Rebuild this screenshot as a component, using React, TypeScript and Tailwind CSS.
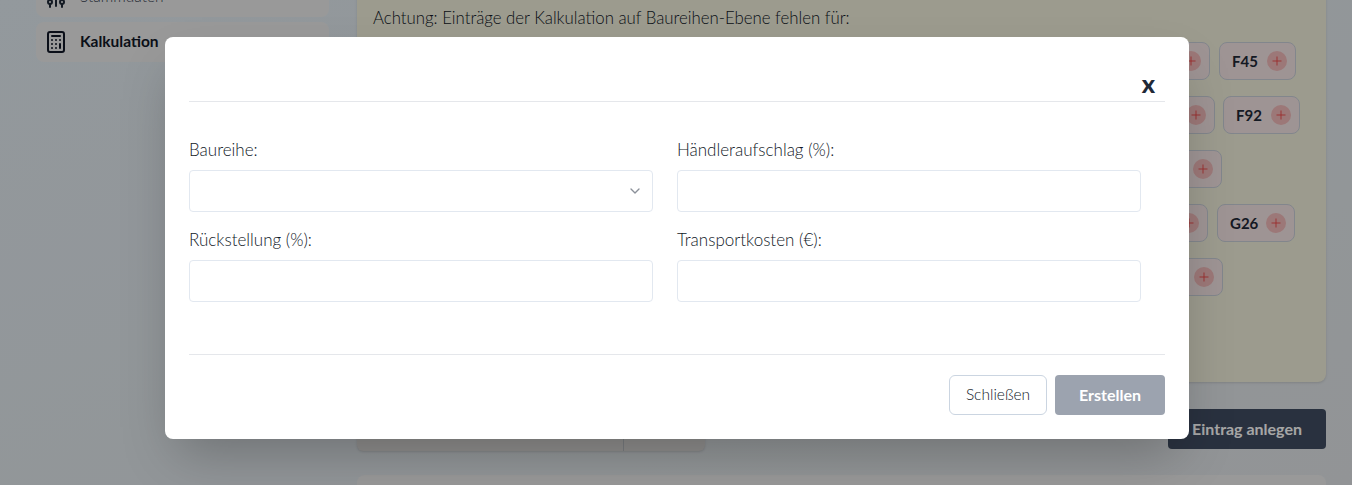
import React from "react";
import { Calculator, ChevronDown, Plus } from "lucide-react";

const fontStack = "font-['Lato','Noto_Sans',sans-serif]";

const Chip = ({ label, className = "" }: { label: string; className?: string }) => (
  <div
    className={`h-[38px] flex items-center justify-between pl-[12px] pr-[8px] rounded-lg border border-[#c8ced8] bg-[#f3e4e4] ${className}`}
  >
    <span className="text-[15px] font-bold text-[#1f2937]">{label}</span>
    <span className="w-5 h-5 rounded-full bg-[#f0b8b8] flex items-center justify-center">
      <Plus className="w-3.5 h-3.5 text-[#ef4444]" strokeWidth={1.5} />
    </span>
  </div>
);

const Field = ({ label, select }: { label: string; select?: boolean }) => (
  <div className="w-[464px]">
    <label className="block text-[17px] font-light text-[#111827] leading-6 mb-2">{label}</label>
    <div className="h-[42px] rounded border border-[#e2e8f0] bg-white flex items-center justify-end pr-[9px]">
      {select && <ChevronDown className="w-4 h-4 text-[#8b9099]" />}
    </div>
  </div>
);

const StammdatenIcon = () => (
  <svg
    viewBox="0 0 24 24"
    fill="none"
    stroke="currentColor"
    strokeWidth={2}
    strokeLinecap="round"
    className="w-6 h-6 text-[#1f2937]"
  >
    <path d="M6 2v13M6 19v3M12 2v19M18 2v13M18 19v3" />
    <circle cx="6" cy="17" r="2" />
    <circle cx="18" cy="17" r="2" />
  </svg>
);

export default function App() {
  return (
    <div
      className={`relative h-[485px] overflow-hidden bg-linear-to-br from-[#e2ebf1] to-[#e0e4e7] ${fontStack}`}
    >
      <div className="flex h-full">
        {/* Sidebar */}
        <aside className="w-[357px] shrink-0 pl-9 pr-7 -mt-[23px] flex flex-col gap-[5px]">
          <div className="h-10 rounded-lg bg-[#ececec] flex items-center gap-3 px-2">
            <StammdatenIcon />
            <span className="text-[15.5px] font-light text-[#374151]">Stammdaten</span>
          </div>
          <div className="h-10 rounded-lg bg-[#ececec] flex items-center gap-3 px-2">
            <Calculator className="w-6 h-6 text-[#111827]" />
            <span className="text-[15.5px] font-bold text-[#111827]">Kalkulation</span>
          </div>
        </aside>

        {/* Main column */}
        <main className="flex-1 pr-[26px] -mt-[14px]">
          <div className="h-[396px] rounded-lg bg-[#f0eedb] shadow px-4 pt-[20px]">
            <p className="text-[16.8px] font-light text-[#111827] leading-6">
              Achtung: Einträge der Kalkulation auf Baureihen-Ebene fehlen für:
            </p>
            <div className="mt-[12px] flex flex-col gap-4">
              <div className="flex gap-[9px]">
                <Chip label="F44" className="w-[837px]" />
                <Chip label="F45" className="w-[77px]" />
              </div>
              <div className="flex gap-2">
                <Chip label="F91" className="w-[842px]" />
                <Chip label="F92" className="w-[77px]" />
              </div>
              <div className="flex">
                <Chip label="F98" className="w-[849px]" />
              </div>
              <div className="flex gap-[9px]">
                <Chip label="G23" className="w-[835px]" />
                <Chip label="G26" className="w-[78px]" />
              </div>
              <div className="flex">
                <Chip label="G30" className="w-[850px]" />
              </div>
            </div>
          </div>

          <div className="mt-[27px] flex items-start justify-between">
            <div className="w-[348px] h-[42px] rounded-b-md bg-[#dcdad9] shadow flex justify-end">
              <div className="w-[82px] border-l border-[#bcc0c5]" />
            </div>
            <button className="h-10 w-[158px] rounded bg-[#3f4c61] text-[16px] font-bold text-white">
              Eintrag anlegen
            </button>
          </div>

          <div className="mt-[24px] h-20 rounded-lg bg-[#ececec]" />
        </main>
      </div>

      {/* Modal */}
      <div className="absolute inset-0 bg-black/35 flex items-start justify-center pt-[37px] pl-[2px]">
        <div className="w-[1024px] h-[402px] rounded-lg bg-white shadow-2xl px-6 flex flex-col">
          <div className="h-[65px] border-b border-[#e5e7eb] flex items-end justify-end pr-[10px] pb-[6px]">
            <span className="text-[25px] font-black text-[#1f2937] leading-6">x</span>
          </div>
          <div className="h-[253px] border-b border-[#e5e7eb] pt-[36px]">
            <div className="grid grid-cols-[464px_464px] gap-x-6 gap-y-4">
              <Field label="Baureihe:" select />
              <Field label="Händleraufschlag (%):" />
              <Field label="Rückstellung (%):" />
              <Field label="Transportkosten (€):" />
            </div>
          </div>
          <div className="flex justify-end gap-2 pt-5">
            <button className="h-10 w-[98px] rounded-md border border-[#cbd5e1] bg-white text-[15.5px] font-light text-[#111827]">
              Schließen
            </button>
            <button className="h-10 w-[110px] rounded bg-[#9ca3af] text-[16px] font-bold text-white">
              Erstellen
            </button>
          </div>
        </div>
      </div>
    </div>
  );
}
